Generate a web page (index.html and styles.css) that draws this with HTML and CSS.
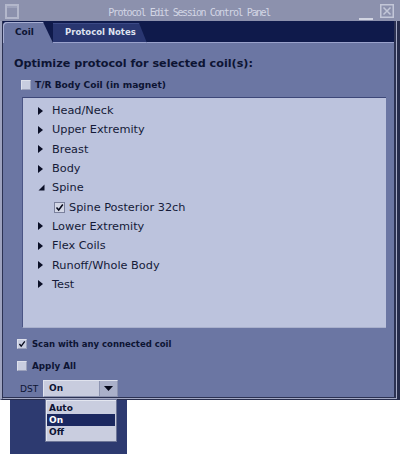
FILE: index.html
```html
<!DOCTYPE html>
<html>
<head>
<meta charset="utf-8">
<link rel="stylesheet" href="styles.css">
</head>
<body>
<div class="window">
  <div class="titlebar">
    <span class="winicon"></span>
    <span class="title">Protocol Edit Session Control Panel</span>
    <span class="minbtn"><span class="minbar"></span></span>
    <span class="closebtn"><svg viewBox="0 0 14 14" width="14" height="14"><rect x="0.75" y="0.75" width="12.5" height="12.5" fill="none" stroke="#c3c7d8" stroke-width="1.5"/><path d="M3.5 3.5 L10.5 10.5 M10.5 3.5 L3.5 10.5" stroke="#c3c7d8" stroke-width="1.5"/></svg></span>
  </div>
  <div class="frame">
    <div class="frame-mid">
      <div class="frame-core">
        <div class="tabs">
          <div class="tab tab-coil">Coil</div>
          <div class="tab tab-notes">Protocol Notes</div>
          <div class="tab-fill"></div>
        </div>
        <div class="panel">
          <div class="heading">Optimize protocol for selected coil(s):</div>
          <div class="opt opt-tr"><span class="cb"></span><span class="lbl">T/R Body Coil (in magnet)</span></div>
          <div class="tree">
            <div class="node"><span class="arrow"><svg width="6" height="8" viewBox="0 0 6 8"><polygon points="0,0 5,4 0,8" fill="#0a0f26"/></svg></span>Head/Neck</div>
            <div class="node"><span class="arrow"><svg width="6" height="8" viewBox="0 0 6 8"><polygon points="0,0 5,4 0,8" fill="#0a0f26"/></svg></span>Upper Extremity</div>
            <div class="node"><span class="arrow"><svg width="6" height="8" viewBox="0 0 6 8"><polygon points="0,0 5,4 0,8" fill="#0a0f26"/></svg></span>Breast</div>
            <div class="node"><span class="arrow"><svg width="6" height="8" viewBox="0 0 6 8"><polygon points="0,0 5,4 0,8" fill="#0a0f26"/></svg></span>Body</div>
            <div class="node"><span class="arrow"><svg width="7" height="7" viewBox="0 0 7 7"><polygon points="6.5,0.5 6.5,6.5 0.5,6.5" fill="#0a0f26"/></svg></span>Spine</div>
            <div class="node child"><span class="tcb"><svg width="9" height="9" viewBox="0 0 9 9"><path d="M1.5 4.5 L3.7 7 L7.8 1.5" fill="none" stroke="#05081a" stroke-width="1.5"/></svg></span>Spine Posterior 32ch</div>
            <div class="node"><span class="arrow"><svg width="6" height="8" viewBox="0 0 6 8"><polygon points="0,0 5,4 0,8" fill="#0a0f26"/></svg></span>Lower Extremity</div>
            <div class="node"><span class="arrow"><svg width="6" height="8" viewBox="0 0 6 8"><polygon points="0,0 5,4 0,8" fill="#0a0f26"/></svg></span>Flex Coils</div>
            <div class="node"><span class="arrow"><svg width="6" height="8" viewBox="0 0 6 8"><polygon points="0,0 5,4 0,8" fill="#0a0f26"/></svg></span>Runoff/Whole Body</div>
            <div class="node"><span class="arrow"><svg width="6" height="8" viewBox="0 0 6 8"><polygon points="0,0 5,4 0,8" fill="#0a0f26"/></svg></span>Test</div>
          </div>
          <div class="opt opt-scan"><span class="cb"><svg width="10" height="10" viewBox="0 0 10 10"><path d="M1.8 5 L4 7.8 L8.5 1.8" fill="none" stroke="#05081a" stroke-width="1.6"/></svg></span><span class="lbl">Scan with any connected coil</span></div>
          <div class="opt opt-apply"><span class="cb"></span><span class="lbl">Apply All</span></div>
          <div class="dst-row">
            <span class="dst-lbl">DST</span>
            <div class="combo">
              <span class="combo-val">On</span>
              <span class="combo-btn"><svg width="9" height="5" viewBox="0 0 9 5"><polygon points="0,0 9,0 4.5,5" fill="#05081a"/></svg></span>
              <div class="popup">
                <div class="item">Auto</div>
                <div class="item sel">On</div>
                <div class="item">Off</div>
              </div>
            </div>
          </div>
        </div>
      </div>
    </div>
  </div>
</div>
<div class="under"></div>
</body>
</html>
```

FILE: styles.css
```css
* { box-sizing: border-box; }
html, body { margin: 0; padding: 0; }
body {
  background: #ffffff;
  font-family: "DejaVu Sans", sans-serif;
  color: #0d1433;
  width: 400px;
  height: 454px;
  overflow: hidden;
}
.window {
  width: 400px;
  height: 400px;
  display: flex;
  flex-direction: column;
}
.titlebar {
  height: 21px;
  flex: none;
  background: #8c91ad;
  display: flex;
  align-items: center;
  padding: 0 6px 0 5px;
}
.winicon {
  width: 14px;
  height: 15px;
  border: 2px solid #b3b7cb;
  box-shadow: inset 0 2px 0 #9da2bb;
  margin-top: 1px;
}
.title {
  flex: 1;
  text-align: center;
  font-family: "DejaVu Sans Mono", monospace;
  font-size: 10px;
  letter-spacing: -1.4px;
  color: #d3d6e5;
  padding-top: 3px;
}
.minbtn {
  width: 14px;
  height: 14px;
  display: flex;
  align-items: flex-end;
  margin-right: 7px;
  margin-top: 4px;
}
.minbar {
  width: 14px;
  height: 2px;
  background: #d2d5e2;
}
.closebtn {
  width: 14px;
  height: 14px;
  display: block;
  margin-top: 1px;
}
.closebtn svg { display: block; }
.frame {
  flex: 1;
  display: flex;
  flex-direction: column;
  border-left: 2px solid #9ea3bf;
  border-right: 3px solid #262c4c;
  border-bottom: 1px solid #262c4c;
}
.frame-mid {
  flex: 1;
  display: flex;
  flex-direction: column;
  border-left: 1px solid #2b3152;
  border-right: 1px solid #a3a8c3;
  border-bottom: 1px solid #a3a8c3;
}
.frame-core {
  flex: 1;
  display: flex;
  flex-direction: column;
  border-right: 2px solid #2b3152;
  border-bottom: 1px solid #2b3152;
}
.tabs {
  height: 22px;
  flex: none;
  background: #0f1a4b;
  display: flex;
  align-items: flex-end;
}
.tab {
  font-weight: bold;
  white-space: nowrap;
}
.tab-coil {
  width: 50px;
  height: 21px;
  background: #6b76a3;
  border-radius: 4px 0 0 0;
  clip-path: polygon(0 0, 40px 0, 50px 100%, 0 100%);
  box-shadow: inset 1px 1px 0 #a7aed2;
  font-size: 9px;
  line-height: 21px;
  padding-left: 12px;
  color: #0d1433;
}
.tab-notes {
  width: 94px;
  height: 20px;
  background: #293670;
  clip-path: polygon(0 0, 86px 0, 94px 100%, 0 100%);
  border-bottom: 1px solid #9aa2cc;
  box-shadow: inset 0 1px 0 #3c4a86;
  font-size: 8.5px;
  line-height: 19px;
  padding-left: 12px;
  color: #dfe2ef;
}
.tab-fill {
  flex: 1;
  height: 1px;
  background: #9aa2cc;
}
.panel {
  flex: 1;
  background: #6b76a3;
  padding: 13px 8px 0 11px;
  display: flex;
  flex-direction: column;
}
.heading {
  font-weight: bold;
  font-size: 11.2px;
  line-height: 16px;
  height: 16px;
  white-space: nowrap;
}
.opt {
  display: flex;
  align-items: center;
  height: 14px;
  font-weight: bold;
  font-size: 8.8px;
  white-space: nowrap;
}
.cb {
  width: 10px;
  height: 10px;
  background: #c8cde0;
  border-top: 1px solid #dde0ec;
  border-left: 1px solid #dde0ec;
  border-right: 1px solid #9aa0bb;
  border-bottom: 1px solid #9aa0bb;
  display: flex;
  align-items: center;
  justify-content: center;
  flex: none;
}
.cb svg { display: block; }
.opt-tr { margin-top: 5.5px; margin-left: 7px; gap: 4px; font-size: 9.1px; }
.opt-scan { margin-top: 9px; margin-left: 3px; gap: 5px; font-size: 8.5px; }
.opt-apply { margin-top: 8px; margin-left: 3px; gap: 5px; }
.tree {
  margin-top: 5.5px;
  margin-left: 8px;
  height: 231px;
  background: #bcc3dd;
  border-top: 1px solid #3d4778;
  border-left: 1px solid #4a5484;
  border-bottom: 1px solid #a9b0cc;
  padding-top: 3px;
}
.node {
  height: 19.3px;
  display: flex;
  align-items: center;
  padding-left: 15px;
  font-size: 11.3px;
  color: #141a38;
  white-space: nowrap;
}
.arrow {
  width: 14px;
  flex: none;
  display: flex;
  align-items: center;
}
.arrow svg { display: block; }
.node.child { padding-left: 31px; }
.tcb {
  width: 11px;
  height: 11px;
  flex: none;
  background: #d3d7e6;
  border: 1px solid #7a809c;
  margin-right: 4px;
  display: flex;
  align-items: center;
  justify-content: center;
}
.tcb svg { display: block; }
.dst-row {
  margin-top: 7px;
  margin-left: 6px;
  display: flex;
  align-items: center;
  gap: 5px;
  height: 17px;
}
.dst-lbl {
  font-size: 9px;
  width: 18px;
  color: #0d1433;
}
.combo {
  position: relative;
  width: 75px;
  height: 17px;
  display: flex;
  background: #c8ccde;
  border-top: 1px solid #e0e3ee;
  border-left: 1px solid #e0e3ee;
  border-right: 1px solid #8c93b0;
  border-bottom: 1px solid #8c93b0;
}
.combo-val {
  flex: 1;
  font-weight: bold;
  font-size: 9px;
  line-height: 15px;
  padding-left: 5px;
}
.combo-btn {
  width: 18px;
  background: #aab0c9;
  border-left: 1px solid #8c93b0;
  display: flex;
  align-items: center;
  justify-content: center;
}
.combo-btn svg { display: block; }
.popup {
  position: absolute;
  left: 1px;
  top: 18px;
  width: 72px;
  height: 43px;
  background: #c9cddf;
  border: 1px solid #6d7597;
  box-shadow: inset 1px 1px 0 #e3e6f0;
  padding: 2px 1px 4px 1px;
  z-index: 2;
}
.item {
  height: 12px;
  line-height: 12px;
  font-weight: bold;
  font-size: 9px;
  padding-left: 2px;
  color: #0d1433;
}
.item.sel {
  background: #1b2860;
  color: #ffffff;
}
.under {
  margin-left: 10px;
  width: 117px;
  height: 54px;
  background: #2d3a70;
}
```
